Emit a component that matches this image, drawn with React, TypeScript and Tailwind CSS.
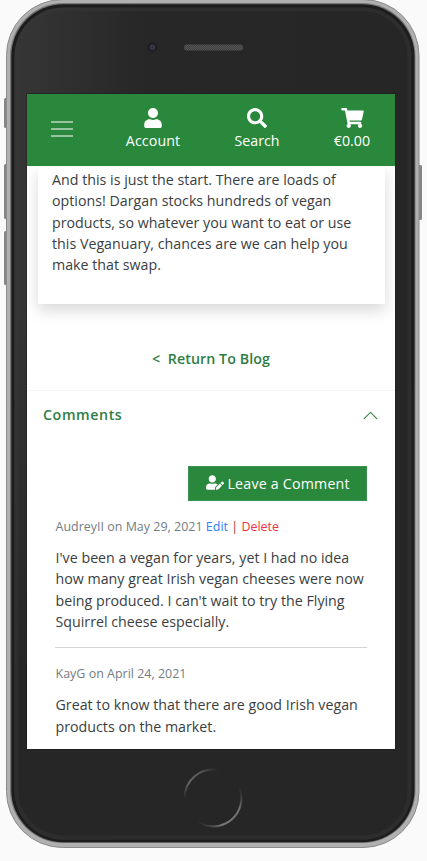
import React from "react";
import { FaUser, FaSearch, FaShoppingCart, FaUserEdit } from "react-icons/fa";
import { BsChevronUp } from "react-icons/bs";

function Lines({ lines }: { lines: string[] }) {
  return (
    <p className="text-[14.22px] leading-[21.33px] tracking-[0.01px] whitespace-nowrap text-[#3a3e42] font-normal">
      {lines.map((line) => (
        <span key={line} className="block">
          {line}
        </span>
      ))}
    </p>
  );
}

function NavItem({ icon, label, className }: { icon: React.ReactNode; label: string; className: string }) {
  return (
    <a className={`flex flex-col items-center whitespace-nowrap text-[14.22px] leading-[21px] font-medium text-white ${className}`}>
      {icon}
      <span className="mt-[2px]">{label}</span>
    </a>
  );
}

function Header() {
  return (
    <header className="relative z-10 flex h-[72px] shrink-0 items-start bg-[#2a883c] pt-[14px]">
      <button className="mt-[13px] ml-6 flex w-[22px] flex-col gap-[5px]" aria-label="Menu">
        <span className="h-[2px] w-full bg-white/50" />
        <span className="h-[2px] w-full bg-white/50" />
        <span className="h-[2px] w-full bg-white/50" />
      </button>
      <NavItem className="ml-[47px] w-[66px] tracking-[0.1px]" icon={<FaUser className="h-5 w-[18px]" />} label="Account" />
      <NavItem className="ml-[42px] w-[58px]" icon={<FaSearch className="h-5 w-5" />} label="Search" />
      <NavItem className="ml-[37px] w-[58px]" icon={<FaShoppingCart className="h-5 w-[23px]" />} label="€0.00" />
    </header>
  );
}

function Screen() {
  return (
    <main className="flex h-[655px] w-[368px] flex-col overflow-hidden bg-white font-['Open_Sans','Liberation_Sans',sans-serif]">
      <Header />
      <section className="mr-[10px] ml-[11px] h-[138px] shrink-0 bg-white pt-[3px] pl-[14px] shadow-[0_7px_14px_rgba(0,0,0,0.15)]">
        <Lines
          lines={[
            "And this is just the start. There are loads of",
            "options! Dargan stocks hundreds of vegan",
            "products, so whatever you want to eat or use",
            "this Veganuary, chances are we can help you",
            "make that swap.",
          ]}
        />
      </section>
      <a className="mt-[44px] block h-[42px] pl-[125px] text-[14.22px] leading-[21px] font-semibold tracking-[0.08px] whitespace-pre text-[#2f7d43]">
        {"<  Return To Blog"}
      </a>
      <div className="flex h-[49px] shrink-0 items-center border-t border-[#f5f5f5] pr-4 pb-[2px] pl-4 text-[#2a883c]">
        <h2 className="flex-1 text-[14.22px] leading-[21px] font-semibold tracking-[0.6px] text-[#2f7d43]">Comments</h2>
        <BsChevronUp className="mt-[2px] h-[17px] w-[17px]" />
      </div>
      <section className="flex flex-col pr-7 pl-7">
        <button className="mt-[27px] flex h-[35px] w-[179px] items-center self-end border border-[#3b9150] bg-[#2a883c] pl-[17px] text-[14.22px] whitespace-nowrap text-white">
          <FaUserEdit className="h-[15px] w-[18px] -translate-y-px" />
          <span className="ml-[3.5px] font-medium tracking-[0.2px]">Leave a Comment</span>
        </button>
        <p className="mt-[16px] mb-[11px] pl-[0.5px] text-[12.44px] leading-[19px] font-normal tracking-[0.02px] whitespace-nowrap text-[#747c84]">
          AudreyII on May 29, 2021 <a className="text-[#2f80fd]">Edit</a> <span className="text-[#a33]">|</span>{" "}
          <a className="text-[#f5303f]">Delete</a>
        </p>
        <div className="pl-[0.5px]">
          <Lines
            lines={[
              "I've been a vegan for years, yet I had no idea",
              "how many great Irish vegan cheeses were now",
              "being produced. I can't wait to try the Flying",
              "Squirrel cheese especially.",
            ]}
          />
        </div>
        <hr className="mt-[15px] border-[#d5d5d7]" />
        <p className="mt-[16px] mb-[11px] pl-[0.5px] text-[12.44px] leading-[19px] font-normal tracking-[0.02px] whitespace-nowrap text-[#747c84]">
          KayG on April 24, 2021
        </p>
        <div className="pl-[0.5px]">
          <Lines lines={["Great to know that there are good Irish vegan", "products on the market."]} />
        </div>
      </section>
    </main>
  );
}

function PhoneHardware() {
  return (
    <svg className="absolute inset-0" width="427" height="861" viewBox="0 0 427 861" fill="none">
      <defs>
        <linearGradient id="glass" x1="0" y1="0" x2="1" y2="0">
          <stop offset="0" stopColor="#363636" />
          <stop offset="0.32" stopColor="#272727" />
          <stop offset="1" stopColor="#262626" />
        </linearGradient>
        <linearGradient id="fade" x1="0" y1="0" x2="0" y2="1">
          <stop offset="0.35" stopColor="#262626" stopOpacity="0" />
          <stop offset="0.8" stopColor="#262626" />
        </linearGradient>
        <linearGradient id="upperArc" x1="184" y1="798" x2="218" y2="769" gradientUnits="userSpaceOnUse">
          <stop offset="0" stopColor="#666" stopOpacity="0" />
          <stop offset="0.3" stopColor="#666" />
          <stop offset="0.7" stopColor="#555" />
          <stop offset="1" stopColor="#444" stopOpacity="0" />
        </linearGradient>
        <linearGradient id="lowerArc" x1="198" y1="823" x2="240" y2="787" gradientUnits="userSpaceOnUse">
          <stop offset="0" stopColor="#666" stopOpacity="0" />
          <stop offset="0.3" stopColor="#777" />
          <stop offset="0.75" stopColor="#707070" />
          <stop offset="1" stopColor="#555" stopOpacity="0" />
        </linearGradient>
        <pattern id="mesh" width="2" height="2" patternUnits="userSpaceOnUse">
          <rect width="2" height="2" fill="#414141" />
          <rect width="1" height="1" fill="#555" />
          <rect x="1" y="1" width="1" height="1" fill="#555" />
        </pattern>
      </defs>
      <g fill="#858585">
        <rect x="4" y="98" width="5" height="30" rx="1.5" />
        <rect x="4" y="164" width="5" height="55" rx="1.5" />
        <rect x="4" y="231" width="5" height="54" rx="1.5" />
        <rect x="417" y="165" width="5" height="55" rx="1.5" />
      </g>
      <rect x="6.5" y="-0.5" width="412.5" height="848" rx="56" fill="#b0b0b0" stroke="#8b8b8b" />
      <rect x="10" y="3" width="405.5" height="840" rx="53" fill="#777" />
      <rect x="11.3" y="4.2" width="403.2" height="838" rx="52" fill="#1d1d1d" />
      <rect x="14.5" y="7.5" width="397" height="832" rx="49" fill="url(#glass)" />
      <rect x="14.5" y="7.5" width="397" height="832" rx="49" fill="url(#fade)" />
      <rect x="16.5" y="9.5" width="393" height="828" rx="47" stroke="#383838" strokeOpacity="0.45" strokeWidth="4" />
      <circle cx="152.5" cy="47.3" r="5" fill="#1e1e27" />
      <circle cx="152.5" cy="47.3" r="2" fill="#2d2d3d" stroke="#4a4a55" />
      <rect x="184" y="44.5" width="59" height="6" rx="3" fill="url(#mesh)" />
      <path d="M184.5 798A28.5 28.5 0 0 1 218 770" stroke="url(#upperArc)" strokeWidth="2" />
      <path d="M241.5 798A28.5 28.5 0 0 0 239.5 787M241.5 798A28.5 28.5 0 0 1 197 821.5" stroke="url(#lowerArc)" strokeWidth="2" />
      <rect x="26.5" y="93.5" width="369" height="656" fill="#1c1c1c" />
    </svg>
  );
}

export default function App() {
  return (
    <div className="relative h-[861px] w-[427px] overflow-hidden bg-[#fafafa]">
      <PhoneHardware />
      <div className="relative pt-[94px] pl-[27px]">
        <Screen />
      </div>
    </div>
  );
}
